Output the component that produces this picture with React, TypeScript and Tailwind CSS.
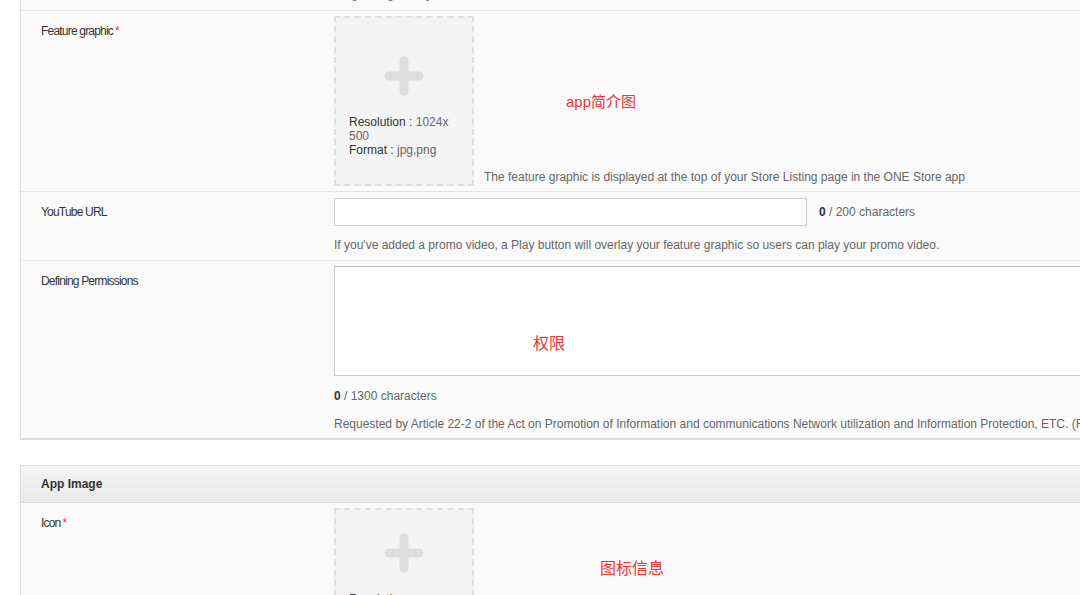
import { ReactNode } from "react";

const font = { fontFamily: '"Liberation Sans", Arial, sans-serif' };
const cjk = { fontFamily: '"Liberation Sans", "Noto Sans CJK SC", sans-serif' };

function Plus() {
  return (
    <svg width="40" height="40" viewBox="0 0 40 40" className="mx-auto block">
      <path d="M20 5v30M5 20h30" stroke="#dddddd" strokeWidth="9" strokeLinecap="round" />
    </svg>
  );
}

function UploadBox({ className, lines }: { className: string; lines: ReactNode[] }) {
  return (
    <div className={`w-[140px] shrink-0 border-2 border-dashed border-[#dddddd] bg-[#f4f4f4] px-[13px] ${className}`}>
      <Plus />
      <div className="mt-[19px] text-[12px] leading-[14px] text-[#666]">
        {lines.map((line, i) => (
          <p key={i}>{line}</p>
        ))}
      </div>
    </div>
  );
}

function Label({ text, required }: { text: string; required?: boolean }) {
  return (
    <div className="w-[313px] shrink-0 pl-[20px] pt-[13px] text-[12px] leading-[15px]">
      <span className="tracking-[-0.8px] text-[#333]">{text}</span>
      {required ? <span className="ml-[2px] text-[#e4393c]">*</span> : null}
    </div>
  );
}

export default function App() {
  return (
    <div className="relative h-[595px] w-[1080px] overflow-hidden bg-white" style={font}>
      <div className="ml-[20px] w-[1200px] border-b-2 border-l border-[#dddddd] bg-[#fafafa]">
        {/* clipped previous row */}
        <div className="flex h-[11px] overflow-hidden border-b border-[#e3e3e3]">
          <div className="w-[313px] shrink-0" />
          <p className="mt-[-13px] text-[12px] leading-[14px] text-[#666]">Large images stay on</p>
        </div>

        <div className="flex border-b border-[#e3e3e3]">
          <Label text="Feature graphic" required />
          <div className="flex items-end py-[5px]">
            <UploadBox
              className="h-[170px] pt-[38px]"
              lines={[
                <>
                  <span className="text-[#333]">Resolution :</span> 1024x 500
                </>,
                <>
                  <span className="text-[#333]">Format :</span> jpg,png
                </>,
              ]}
            />
            <p className="mb-[2px] ml-[10px] text-[12px] leading-[14px] text-[#666]">
              The feature graphic is displayed at the top of your Store Listing page in the ONE Store app
            </p>
          </div>
        </div>

        <div className="flex border-b border-[#e3e3e3]">
          <Label text="YouTube URL" />
          <div className="pb-[8px] pt-[6px]">
            <div className="flex items-center">
              <input className="h-[28px] w-[473px] border border-[#cccccc] bg-white px-2 text-[12px] outline-none" />
              <span className="ml-[12px] text-[12px] text-[#666]">
                <b className="text-[#333]">0</b> / 200 characters
              </span>
            </div>
            <p className="mt-[12px] text-[12px] leading-[14px] text-[#666]">
              If you've added a promo video, a Play button will overlay your feature graphic so users can play your promo video.
            </p>
          </div>
        </div>

        <div className="flex">
          <Label text="Defining Permissions" />
          <div className="min-w-0 flex-1 pb-[7px] pt-[5px]">
            <textarea className="block h-[110px] w-full resize-none border border-[#cccccc] border-t-[#bbbbbb] bg-white outline-none" />
            <p className="mt-[13px] text-[12px] leading-[14px] text-[#666]">
              <b className="text-[#333]">0</b> / 1300 characters
            </p>
            <p className="mt-[14px] whitespace-nowrap text-[12px] leading-[14px] text-[#666]">
              Requested by Article 22-2 of the Act on Promotion of Information and communications Network utilization and Information Protection, ETC. (Regarding access rights of smartphone apps)
            </p>
          </div>
        </div>
      </div>

      <div className="ml-[20px] mt-[25px] w-[1200px] border-l border-t border-[#dddddd] bg-[#fafafa]">
        <div className="flex h-[37px] items-center border-b border-[#dddddd] bg-gradient-to-b from-[#f4f4f4] to-[#e9e9e9] pl-[20px]">
          <span className="text-[12px] font-bold text-[#333]">App Image</span>
        </div>
        <div className="flex">
          <Label text="Icon" required />
          <div className="py-[5px]">
            <UploadBox
              className="h-[160px] pt-[23px]"
              lines={[
                <>
                  <span className="text-[#333]">Resolution :</span> 512x512
                </>,
                <>
                  <span className="text-[#333]">Format :</span> png
                </>,
              ]}
            />
          </div>
        </div>
      </div>

      <span className="absolute left-[566px] top-[92px] text-[15px] leading-[20px] text-[#ee3333]" style={cjk}>
        app简介图
      </span>
      <span className="absolute left-[533px] top-[333px] text-[16px] leading-[22px] text-[#ee3333]" style={cjk}>
        权限
      </span>
      <span className="absolute left-[600px] top-[558px] text-[16px] leading-[22px] text-[#ee3333]" style={cjk}>
        图标信息
      </span>
    </div>
  );
}
